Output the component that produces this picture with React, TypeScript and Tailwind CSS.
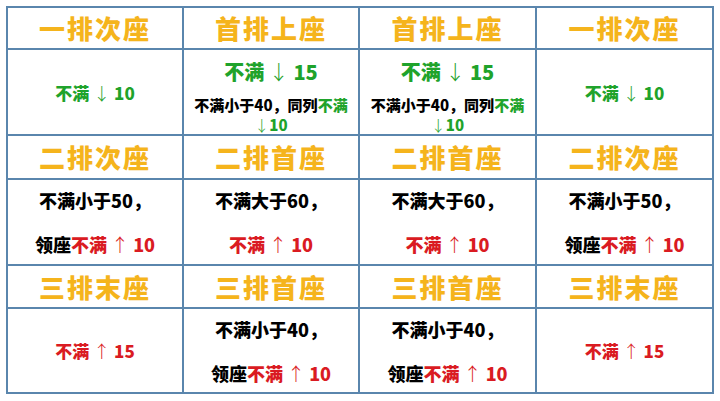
const FONT = { fontFamily: '"Noto Sans CJK SC", "Noto Sans", sans-serif' };

const green = "text-[#1fa32b]";
const red = "text-[#da1b22]";

function Arrow({ dir }: { dir: "up" | "down" }) {
  return <span className="font-light">{dir === "up" ? "↑" : "↓"}</span>;
}

function Head({ text }: { text: string }) {
  return (
    <div className="flex items-center justify-center border-r-2 border-b-2 border-[#5a86ad]">
      <span className="text-[26px] leading-none font-black tracking-[2px] text-[#f5b41c]">{text}</span>
    </div>
  );
}

function Cell({ children, className = "" }: { children: React.ReactNode; className?: string }) {
  return (
    <div className={`flex flex-col items-center justify-center border-r-2 border-b-2 border-[#5a86ad] text-center font-black ${className}`}>
      {children}
    </div>
  );
}

function Simple({ color, dir, num }: { color: string; dir: "up" | "down"; num: string }) {
  return (
    <Cell>
      <span className={`text-[17px] leading-none ${color}`}>
        不满 <Arrow dir={dir} /> {num}
      </span>
    </Cell>
  );
}

function Front() {
  return (
    <Cell className="pt-[12px]">
      <div className={`text-[20px] leading-none ${green} mb-[13px]`}>
        不满 <Arrow dir="down" /> 15
      </div>
      <div className="text-[15px] leading-[20px] text-black">
        不满小于40，同列<span className={green}>不满</span>
      </div>
      <div className={`text-[15px] leading-[20px] ${green}`}>
        <Arrow dir="down" />10
      </div>
    </Cell>
  );
}

function Lead({ first, lead }: { first: string; lead?: boolean }) {
  return (
    <Cell>
      <div className="text-[18px] leading-none text-black">{first}</div>
      <div className="text-[18px] leading-none mt-[26px]">
        {lead && <span className="text-black">领座</span>}
        <span className={red}>
          不满 <Arrow dir="up" /> 10
        </span>
      </div>
    </Cell>
  );
}

export default function App() {
  return (
    <div className="w-[720px] h-[401px] bg-white p-[6px]" style={FONT}>
      <div className="grid grid-cols-[176px_176px_177px_177px] grid-rows-[42px_86px_44px_86px_43px_85px] w-[708px] border-l-2 border-t-2 border-[#5a86ad]">
        <Head text="一排次座" />
        <Head text="首排上座" />
        <Head text="首排上座" />
        <Head text="一排次座" />

        <Simple color={green} dir="down" num="10" />
        <Front />
        <Front />
        <Simple color={green} dir="down" num="10" />

        <Head text="二排次座" />
        <Head text="二排首座" />
        <Head text="二排首座" />
        <Head text="二排次座" />

        <Lead first="不满小于50，" lead />
        <Lead first="不满大于60，" />
        <Lead first="不满大于60，" />
        <Lead first="不满小于50，" lead />

        <Head text="三排末座" />
        <Head text="三排首座" />
        <Head text="三排首座" />
        <Head text="三排末座" />

        <Simple color={red} dir="up" num="15" />
        <Lead first="不满小于40，" lead />
        <Lead first="不满小于40，" lead />
        <Simple color={red} dir="up" num="15" />
      </div>
    </div>
  );
}
